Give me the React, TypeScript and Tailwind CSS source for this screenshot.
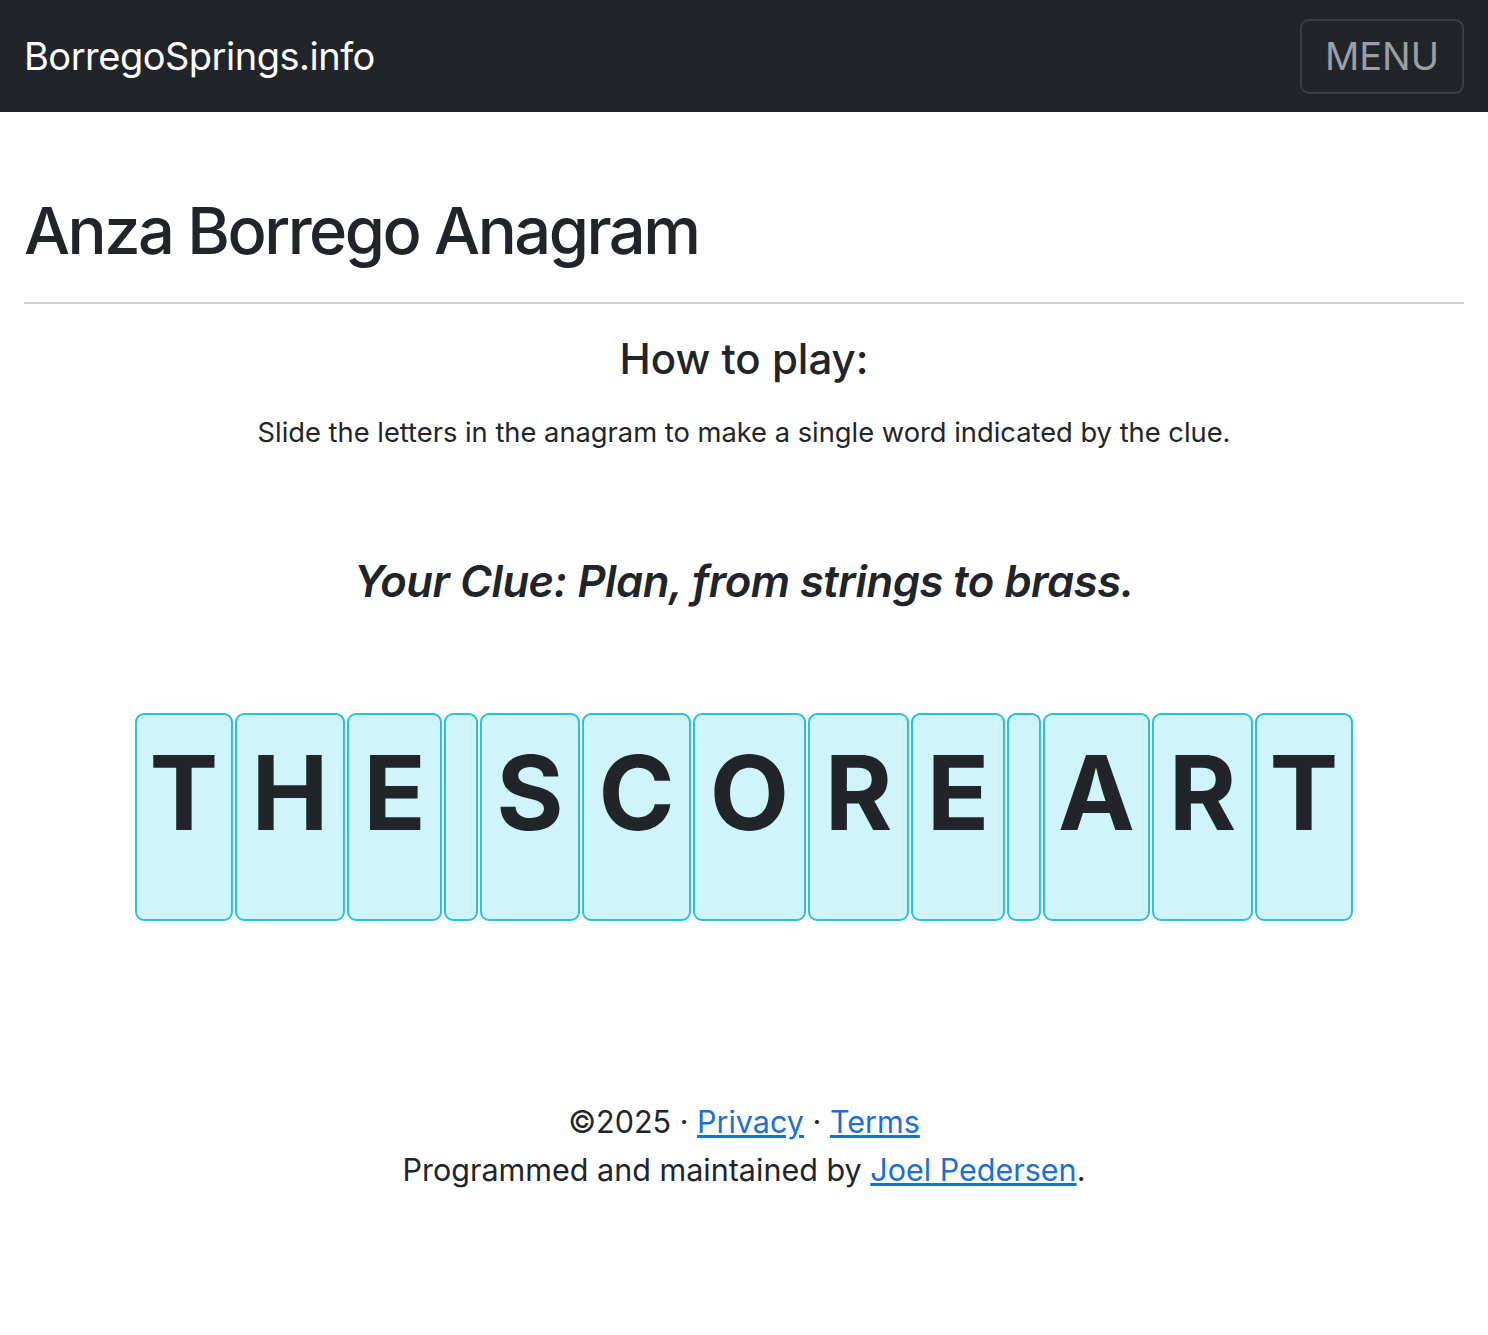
import React from 'react'

const tiles = [
  { ch: 'T', w: 'w-[98px]' },
  { ch: 'H', w: 'w-[110px]' },
  { ch: 'E', w: 'w-[95px]' },
  { ch: '', w: 'w-[34px]' },
  { ch: 'S', w: 'w-[100px]' },
  { ch: 'C', w: 'w-[109px]' },
  { ch: 'O', w: 'w-[113px]' },
  { ch: 'R', w: 'w-[101px]' },
  { ch: 'E', w: 'w-[94px]' },
  { ch: '', w: 'w-[34px]' },
  { ch: 'A', w: 'w-[107px]' },
  { ch: 'R', w: 'w-[101px]' },
  { ch: 'T', w: 'w-[98px]' },
]

export default function App() {
  return (
    <div className="min-h-screen bg-white text-[#212529] font-['Inter','Liberation_Sans',sans-serif]">
      {/* Navbar */}
      <nav className="flex h-[112px] items-center justify-between bg-[#212529] px-[24px]">
        <span className="text-[38px] text-white tracking-[-0.5px]">BorregoSprings.info</span>
        <button className="flex h-[75px] w-[164px] items-center justify-center rounded-[9px] border-2 border-[#3a3e43] text-[38px] text-[#9b9ea2]">
          MENU
        </button>
      </nav>

      <main className="px-[24px]">
        <h1 className="mt-[80px] text-[65px] leading-[1.2] font-medium tracking-[-2.5px]">Anza Borrego Anagram</h1>
        <hr className="mt-[32px] border-t-2 border-[#cfcfcf]" />

        <h2 className="mt-[30px] text-center text-[42px] font-medium leading-[1.2]">How to play:</h2>
        <p className="mt-[29px] text-center text-[27.3px] leading-[1.5]">
          Slide the letters in the anagram to make a single word indicated by the clue.
        </p>

        <h3 className="mt-[102px] text-center text-[43.6px] italic font-semibold leading-[1.2] tracking-[-0.5px]">
          Your Clue: Plan, from strings to brass.
        </h3>

        {/* Tiles */}
        <div className="mt-[104px] flex justify-center gap-[2px]">
          {tiles.map((t, i) => (
            <div
              key={i}
              className={`${t.w} flex h-[208px] justify-center rounded-[9px] border-2 border-[#29c1dc] bg-[#cff4fc] pt-[26px] text-[103px] leading-none font-bold`}
            >
              {t.ch}
            </div>
          ))}
        </div>

        {/* Footer */}
        <footer className="mt-[177px] text-center text-[30.5px] leading-[48px]">
          <div>
            ©2025 · <a href="#" className="text-[#1a6fd8] underline">Privacy</a> ·{' '}
            <a href="#" className="text-[#1a6fd8] underline">Terms</a>
          </div>
          <div>
            Programmed and maintained by <a href="#" className="text-[#1a6fd8] underline">Joel Pedersen</a>.
          </div>
        </footer>
      </main>
    </div>
  )
}
